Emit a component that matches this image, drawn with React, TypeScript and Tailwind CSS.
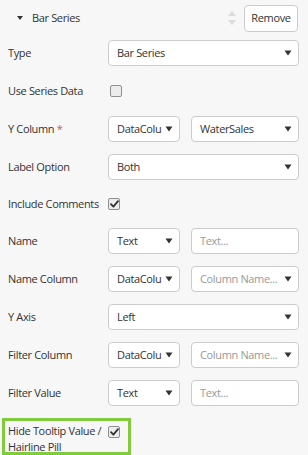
import React from "react";

function Arrow() {
  return (
    <svg width="8" height="6" viewBox="0 0 8 6" className="shrink-0">
      <path d="M0.5 0.5 L7.5 0.5 L4 5.5 Z" fill="#333" />
    </svg>
  );
}

function Select({ value, placeholder, className = "" }: { value?: string; placeholder?: string; className?: string }) {
  return (
    <div className={`flex h-[26px] items-center justify-between rounded-[4px] border border-[#cccccc] bg-white pl-[8px] pr-[6px] ${className}`}>
      <span className={`mr-[4px] whitespace-nowrap ${value ? "text-[#333]" : "text-[#999]"}`}>{value ?? placeholder}</span>
      <Arrow />
    </div>
  );
}

function TextInput({ placeholder, className = "" }: { placeholder: string; className?: string }) {
  return (
    <div className={`flex h-[26px] items-center rounded-[4px] border border-[#cccccc] bg-white pl-[8px] text-[#999] ${className}`}>
      {placeholder}
    </div>
  );
}

function Checkbox({ checked }: { checked?: boolean }) {
  return (
    <div className="flex h-[12px] w-[12px] items-center justify-center rounded-[2px] border border-[#8f8f8f] bg-[#ececec]">
      {checked && (
        <svg width="9" height="8" viewBox="0 0 9 8">
          <path d="M1 4.2 L3.4 6.6 L8 1.2" stroke="#333" strokeWidth="1.8" fill="none" strokeLinecap="round" strokeLinejoin="round" />
        </svg>
      )}
    </div>
  );
}

function Row({ label, required, children, h = "h-[26px]" }: { label: string; required?: boolean; children: React.ReactNode; h?: string }) {
  return (
    <div className={`flex items-center ${h}`}>
      <div className="w-[100px] shrink-0">
        {label}
        {required && <span className="text-[#d9534f]"> *</span>}
      </div>
      <div className="flex w-[191px] items-center gap-[11px]">{children}</div>
    </div>
  );
}

export default function App() {
  return (
    <div
      className="h-[455px] w-[308px] overflow-hidden bg-[#f7f7f7] text-[11px] tracking-[-0.35px] text-[#333]"
      style={{ fontFamily: '"Open Sans", "Noto Sans", sans-serif' }}
    >
      {/* header */}
      <div className="flex h-[35px] items-center pt-[1px]">
        <svg width="6" height="4" viewBox="0 0 6 4" className="ml-[17px] mr-[9px]">
          <path d="M0 0 L6 0 L3 4 Z" fill="#333" />
        </svg>
        <span>Bar Series</span>
        <div className="ml-auto mr-[8px] flex flex-col gap-[4px]">
          <svg width="8" height="5" viewBox="0 0 8 5"><path d="M0 5 L8 5 L4 0 Z" fill="#dcdcdc" /></svg>
          <svg width="8" height="5" viewBox="0 0 8 5"><path d="M0 0 L8 0 L4 5 Z" fill="#dcdcdc" /></svg>
        </div>
        <button className="mr-[10px] h-[27px] w-[54px] rounded-[4px] border border-[#cccccc] bg-white text-[#333]">
          Remove
        </button>
      </div>

      <div className="mt-[5px] flex flex-col gap-[12px] pl-[8px]">
        <Row label="Type">
          <Select value="Bar Series" className="w-full" />
        </Row>
        <Row label="Use Series Data">
          <div className="pl-[2px]"><Checkbox /></div>
        </Row>
        <Row label="Y Column" required>
          <Select value="DataColu" className="w-[72px]" />
          <Select value="WaterSales" className="w-[108px]" />
        </Row>
        <Row label="Label Option">
          <Select value="Both" className="w-full" />
        </Row>
        <Row label="Include Comments" h="h-[24px]">
          <Checkbox checked />
        </Row>
        <Row label="Name">
          <Select value="Text" className="w-[72px]" />
          <TextInput placeholder="Text..." className="w-[108px]" />
        </Row>
        <Row label="Name Column">
          <Select value="DataColu" className="w-[72px]" />
          <Select placeholder="Column Name..." className="w-[108px]" />
        </Row>
        <Row label="Y Axis">
          <Select value="Left" className="w-full" />
        </Row>
        <Row label="Filter Column">
          <Select value="DataColu" className="w-[72px]" />
          <Select placeholder="Column Name..." className="w-[108px]" />
        </Row>
        <Row label="Filter Value">
          <Select value="Text" className="w-[72px]" />
          <TextInput placeholder="Text..." className="w-[108px]" />
        </Row>
      </div>

      <div className="ml-[2px] mt-[12px] flex h-[37px] w-[129px] items-start border-[3px] border-[#80cc3c] pl-[3px] pt-[2px]">
        <div className="w-[100px] shrink-0 leading-[16px]">Hide Tooltip Value / Hairline Pill</div>
        <div className="pt-[3px]"><Checkbox checked /></div>
      </div>
    </div>
  );
}
